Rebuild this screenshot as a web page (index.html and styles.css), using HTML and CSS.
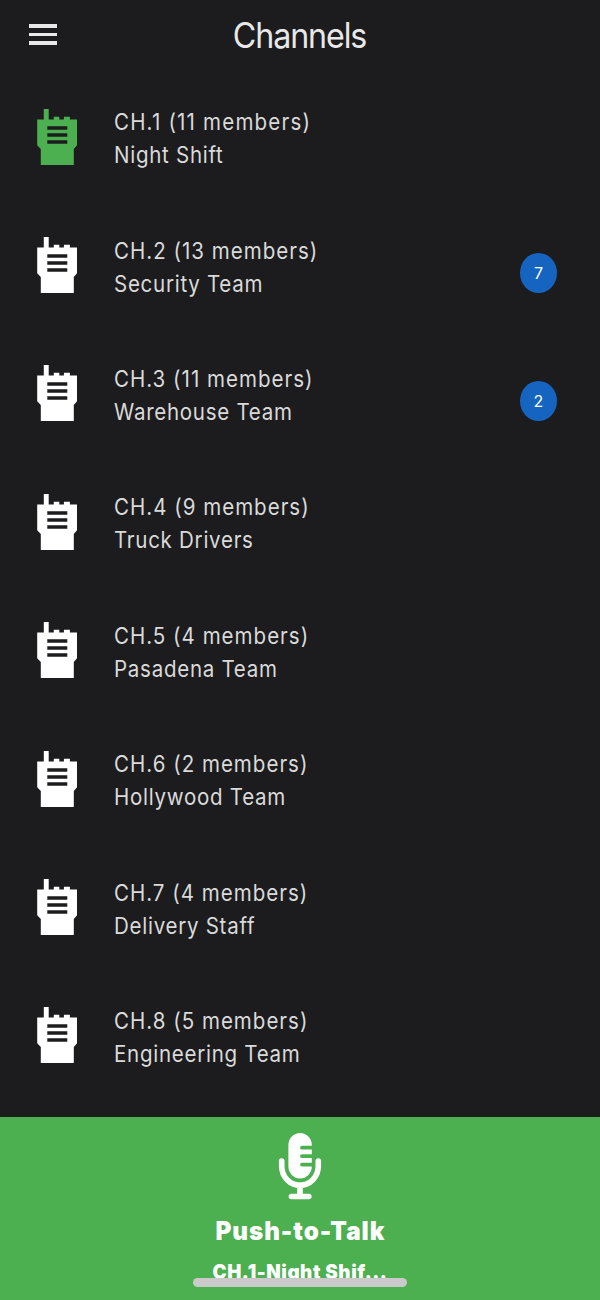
FILE: index.html
```html
<!DOCTYPE html>
<html lang="en">
<head>
    <meta charset="UTF-8">
    <meta name="viewport" content="width=device-width, initial-scale=1.0">
    <title>Channels</title>
    <link rel="stylesheet" href="styles.css">
</head>
<body>
    <svg class="sprite" aria-hidden="true">
        <symbol id="radio" viewBox="0 0 40 56">
            <path fill-rule="evenodd" d="M6.8 0h4.9v10.6h5.1V7.7h5.5v2.9h4.6V7.7h6v2.9H40v25.6l-3.2 3.8v16H3.8V40L.2 36.2V10.6h6.6zM10.3 17.3v3.5h20v-3.5zM10.3 24.3v3.5h20v-3.5zM10.3 31.3v3.5h20v-3.5z"/>
        </symbol>
    </svg>
    <div class="app">
        <header class="header">
            <button class="menu-button" aria-label="Menu">
                <span></span>
                <span></span>
                <span></span>
            </button>
            <h1 class="title"><span>Channels</span></h1>
        </header>

        <ul class="channel-list">
            <li class="channel active">
                <svg class="radio-icon"><use href="#radio"/></svg>
                <div class="channel-text"><p>CH.1 (11 members)</p><p>Night Shift</p></div>
            </li>
            <li class="channel">
                <svg class="radio-icon"><use href="#radio"/></svg>
                <div class="channel-text"><p>CH.2 (13 members)</p><p>Security Team</p></div>
                <span class="badge">7</span>
            </li>
            <li class="channel">
                <svg class="radio-icon"><use href="#radio"/></svg>
                <div class="channel-text"><p>CH.3 (11 members)</p><p>Warehouse Team</p></div>
                <span class="badge">2</span>
            </li>
            <li class="channel">
                <svg class="radio-icon"><use href="#radio"/></svg>
                <div class="channel-text"><p>CH.4 (9 members)</p><p>Truck Drivers</p></div>
            </li>
            <li class="channel">
                <svg class="radio-icon"><use href="#radio"/></svg>
                <div class="channel-text"><p>CH.5 (4 members)</p><p>Pasadena Team</p></div>
            </li>
            <li class="channel">
                <svg class="radio-icon"><use href="#radio"/></svg>
                <div class="channel-text"><p>CH.6 (2 members)</p><p>Hollywood Team</p></div>
            </li>
            <li class="channel">
                <svg class="radio-icon"><use href="#radio"/></svg>
                <div class="channel-text"><p>CH.7 (4 members)</p><p>Delivery Staff</p></div>
            </li>
            <li class="channel">
                <svg class="radio-icon"><use href="#radio"/></svg>
                <div class="channel-text"><p>CH.8 (5 members)</p><p>Engineering Team</p></div>
            </li>
        </ul>

        <footer class="talk-bar">
            <svg class="mic-icon" viewBox="0 0 44 67">
                <path d="M10.4 12a11.7 12 0 0 1 23.4 0v.8H24a1.9 1.9 0 0 0 0 3.8h9.8v4.7H24a1.9 1.9 0 0 0 0 3.8h9.8v4.6H24a1.9 1.9 0 0 0 0 3.8h9.8a11.7 12 0 0 1-23.4 0z"/>
                <path class="mic-stand" d="M3.7 28V33C3.7 44 12 52.2 22 52.2S40.3 44 40.3 33V28M22 52V62M13.4 63.5H30.8"/>
            </svg>
            <p class="talk-label">Push-to-Talk</p>
            <p class="talk-channel">CH.1-Night Shif...</p>
            <div class="home-indicator"></div>
        </footer>
    </div>
</body>
</html>
```
FILE: styles.css
```css
:root {
    --bg: #1c1c1e;
    --text: #dadada;
    --green: #4caf50;
    --blue: #1565c0;
}

* {
    box-sizing: border-box;
}

body {
    margin: 0;
    font-family: Inter, sans-serif;
    background-color: var(--bg);
    color: var(--text);
}

h1, p, ul {
    margin: 0;
    padding: 0;
}

.sprite {
    display: none;
}

.app {
    display: flex;
    flex-direction: column;
    height: 1300px;
    overflow: hidden;
}

.header {
    display: grid;
    grid-template-columns: 58px 1fr 58px;
    align-items: center;
    height: 72px;
    flex-shrink: 0;
}

.menu-button {
    display: flex;
    flex-direction: column;
    gap: 5px;
    width: 57px;
    padding: 0 0 3px 29px;
    border: none;
    background: none;
    cursor: pointer;
}

.menu-button span {
    width: 28px;
    height: 3.5px;
    background-color: #e8e8e8;
}

.title {
    padding-bottom: 2px;
    text-align: center;
    font-size: 35px;
    font-weight: 400;
    line-height: 70px;
    color: #e8e8e8;
}

.title span {
    display: inline-block;
    letter-spacing: -1.2px;
    transform: scaleX(0.92);
}

.channel-list {
    list-style: none;
    padding-top: 2px;
    flex: 1;
}

.channel {
    display: flex;
    align-items: center;
    height: 128.4px;
    padding: 0 43px 0 37px;
}

.radio-icon {
    width: 40px;
    height: 56px;
    margin-top: -3px;
    fill: #ffffff;
}

.active .radio-icon {
    fill: var(--green);
}

.channel-text {
    flex: 1;
    margin-left: 37px;
    font-size: 22.5px;
    font-weight: 400;
    line-height: 33px;
    letter-spacing: 0.8px;
    white-space: nowrap;
    transform: scaleX(0.912);
    transform-origin: left;
}

.channel-text p:first-child {
    letter-spacing: 1.1px;
}

.active .channel-text p:first-child {
    letter-spacing: 1.3px;
}

.badge {
    display: flex;
    align-items: center;
    justify-content: center;
    width: 37px;
    height: 40px;
    margin-top: 13px;
    border-radius: 50%;
    background-color: var(--blue);
    color: #ffffff;
    font-size: 16px;
    font-weight: 400;
}

.talk-bar {
    position: relative;
    display: flex;
    flex-direction: column;
    align-items: center;
    height: 183px;
    flex-shrink: 0;
    padding-top: 16px;
    background-color: var(--green);
    color: #ffffff;
}

.mic-icon {
    width: 44px;
    height: 67px;
    fill: #ffffff;
}

.mic-stand {
    fill: none;
    stroke: #ffffff;
    stroke-width: 5.6;
    stroke-linecap: round;
}

.talk-label {
    margin-top: 15px;
    font-size: 25.5px;
    font-weight: 900;
    line-height: 32px;
    letter-spacing: 1px;
    transform: scaleX(0.95);
}

.talk-channel {
    margin-top: 12px;
    font-size: 20px;
    font-weight: 900;
    line-height: 26px;
    letter-spacing: 0.6px;
    transform: scaleX(0.94);
}

.home-indicator {
    position: absolute;
    left: 193px;
    bottom: 13px;
    width: 214px;
    height: 9px;
    border-radius: 5px;
    background-color: #cacaca;
}
```
